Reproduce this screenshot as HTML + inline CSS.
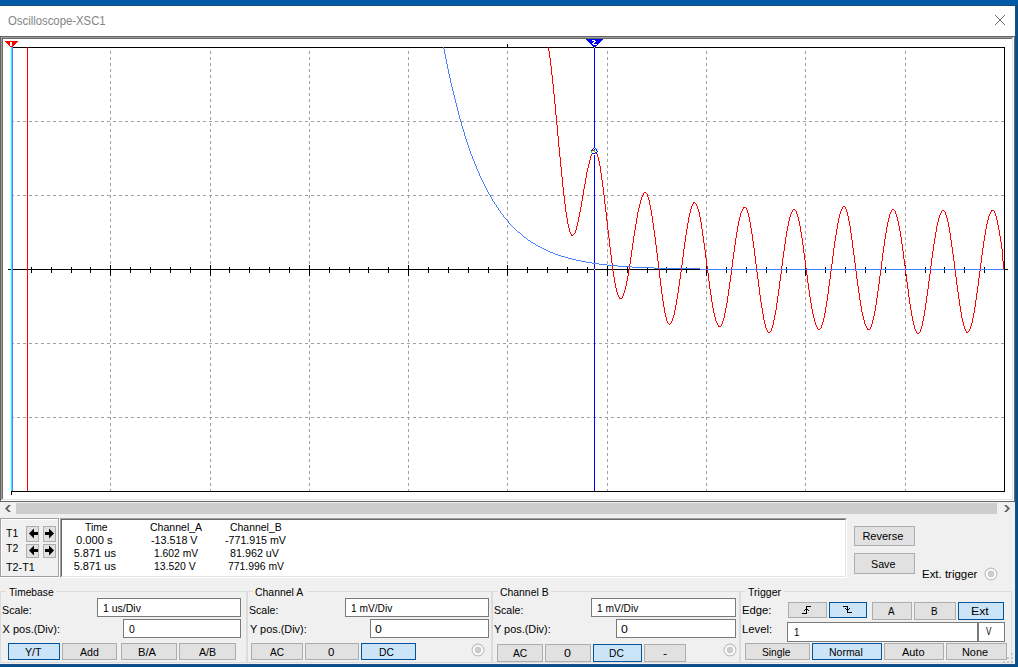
<!DOCTYPE html>
<html><head><meta charset="utf-8"><style>
html,body{margin:0;padding:0;}
body{width:1018px;height:667px;overflow:hidden;position:relative;background:#f0f0f0;font-family:"Liberation Sans",sans-serif;font-size:11px;color:#000;}
.a{position:absolute;}
.t{position:absolute;white-space:pre;line-height:13px;}
.btn{position:absolute;box-sizing:border-box;background:#e1e1e1;border:1px solid #adadad;text-align:center;white-space:pre;}
.sel{background:#cce4f7;border-color:#005499;}
.inp{position:absolute;box-sizing:border-box;background:#fff;border:1px solid #7a7a7a;white-space:pre;}
.grp{position:absolute;box-sizing:border-box;border:1px solid #dcdcdc;}
.gl{position:absolute;background:#f0f0f0;padding:0 2px;white-space:pre;line-height:13px;}
</style></head><body>
<div class="a" style="left:0;top:0;width:1018px;height:5px;background:#005aa5"></div>
<div class="a" style="left:0;top:5px;width:1018px;height:1px;background:#1a4a7a"></div>
<div class="a" style="left:0;top:6px;width:1015px;height:30px;background:#fff"></div>
<div class="t" style="left:8.18px;top:14.59px;font-size:12.3px;line-height:12.3px;color:#858585;transform:scaleX(0.9216);transform-origin:0 0;">Oscilloscope-XSC1</div>
<svg class="a" style="left:994px;top:14px" width="12" height="12"><path d="M1 1L11 11M11 1L1 11" stroke="#6a6a6a" stroke-width="1"/></svg>
<svg style="position:absolute;left:0;top:0" width="1018" height="502" shape-rendering="crispEdges"><rect x="0" y="36" width="1015" height="1" fill="#646464"/><rect x="0" y="36" width="1" height="466" fill="#646464"/><rect x="1014" y="36" width="1" height="466" fill="#646464"/><rect x="0" y="501" width="1015" height="1" fill="#646464"/><rect x="1" y="37" width="1013" height="1" fill="#a0a0a0"/><rect x="1" y="37" width="1" height="464" fill="#a0a0a0"/><rect x="2" y="38" width="1011" height="1" fill="#696969"/><rect x="2" y="38" width="1" height="462" fill="#696969"/><rect x="1013" y="37" width="1" height="464" fill="#ffffff"/><rect x="1" y="500" width="1013" height="1" fill="#ffffff"/><rect x="1012" y="38" width="1" height="462" fill="#e3e3e3"/><rect x="2" y="499" width="1011" height="1" fill="#e3e3e3"/><rect x="3" y="39" width="1009" height="460" fill="#ffffff"/><path fill="#a0a0a0" d="M110 51h1v3h-1zM110 57h1v3h-1zM110 63h1v3h-1zM110 69h1v3h-1zM110 75h1v3h-1zM110 81h1v3h-1zM110 87h1v3h-1zM110 93h1v3h-1zM110 99h1v3h-1zM110 105h1v3h-1zM110 111h1v3h-1zM110 117h1v3h-1zM110 123h1v3h-1zM110 129h1v3h-1zM110 135h1v3h-1zM110 141h1v3h-1zM110 147h1v3h-1zM110 153h1v3h-1zM110 159h1v3h-1zM110 165h1v3h-1zM110 171h1v3h-1zM110 177h1v3h-1zM110 183h1v3h-1zM110 189h1v3h-1zM110 195h1v3h-1zM110 201h1v3h-1zM110 207h1v3h-1zM110 213h1v3h-1zM110 219h1v3h-1zM110 225h1v3h-1zM110 231h1v3h-1zM110 237h1v3h-1zM110 243h1v3h-1zM110 249h1v3h-1zM110 255h1v3h-1zM110 261h1v3h-1zM110 267h1v3h-1zM110 273h1v3h-1zM110 279h1v3h-1zM110 285h1v3h-1zM110 291h1v3h-1zM110 297h1v3h-1zM110 303h1v3h-1zM110 309h1v3h-1zM110 315h1v3h-1zM110 321h1v3h-1zM110 327h1v3h-1zM110 333h1v3h-1zM110 339h1v3h-1zM110 345h1v3h-1zM110 351h1v3h-1zM110 357h1v3h-1zM110 363h1v3h-1zM110 369h1v3h-1zM110 375h1v3h-1zM110 381h1v3h-1zM110 387h1v3h-1zM110 393h1v3h-1zM110 399h1v3h-1zM110 405h1v3h-1zM110 411h1v3h-1zM110 417h1v3h-1zM110 423h1v3h-1zM110 429h1v3h-1zM110 435h1v3h-1zM110 441h1v3h-1zM110 447h1v3h-1zM110 453h1v3h-1zM110 459h1v3h-1zM110 465h1v3h-1zM110 471h1v3h-1zM110 477h1v3h-1zM110 483h1v3h-1zM110 489h1v2h-1zM210 51h1v3h-1zM210 57h1v3h-1zM210 63h1v3h-1zM210 69h1v3h-1zM210 75h1v3h-1zM210 81h1v3h-1zM210 87h1v3h-1zM210 93h1v3h-1zM210 99h1v3h-1zM210 105h1v3h-1zM210 111h1v3h-1zM210 117h1v3h-1zM210 123h1v3h-1zM210 129h1v3h-1zM210 135h1v3h-1zM210 141h1v3h-1zM210 147h1v3h-1zM210 153h1v3h-1zM210 159h1v3h-1zM210 165h1v3h-1zM210 171h1v3h-1zM210 177h1v3h-1zM210 183h1v3h-1zM210 189h1v3h-1zM210 195h1v3h-1zM210 201h1v3h-1zM210 207h1v3h-1zM210 213h1v3h-1zM210 219h1v3h-1zM210 225h1v3h-1zM210 231h1v3h-1zM210 237h1v3h-1zM210 243h1v3h-1zM210 249h1v3h-1zM210 255h1v3h-1zM210 261h1v3h-1zM210 267h1v3h-1zM210 273h1v3h-1zM210 279h1v3h-1zM210 285h1v3h-1zM210 291h1v3h-1zM210 297h1v3h-1zM210 303h1v3h-1zM210 309h1v3h-1zM210 315h1v3h-1zM210 321h1v3h-1zM210 327h1v3h-1zM210 333h1v3h-1zM210 339h1v3h-1zM210 345h1v3h-1zM210 351h1v3h-1zM210 357h1v3h-1zM210 363h1v3h-1zM210 369h1v3h-1zM210 375h1v3h-1zM210 381h1v3h-1zM210 387h1v3h-1zM210 393h1v3h-1zM210 399h1v3h-1zM210 405h1v3h-1zM210 411h1v3h-1zM210 417h1v3h-1zM210 423h1v3h-1zM210 429h1v3h-1zM210 435h1v3h-1zM210 441h1v3h-1zM210 447h1v3h-1zM210 453h1v3h-1zM210 459h1v3h-1zM210 465h1v3h-1zM210 471h1v3h-1zM210 477h1v3h-1zM210 483h1v3h-1zM210 489h1v2h-1zM309 51h1v3h-1zM309 57h1v3h-1zM309 63h1v3h-1zM309 69h1v3h-1zM309 75h1v3h-1zM309 81h1v3h-1zM309 87h1v3h-1zM309 93h1v3h-1zM309 99h1v3h-1zM309 105h1v3h-1zM309 111h1v3h-1zM309 117h1v3h-1zM309 123h1v3h-1zM309 129h1v3h-1zM309 135h1v3h-1zM309 141h1v3h-1zM309 147h1v3h-1zM309 153h1v3h-1zM309 159h1v3h-1zM309 165h1v3h-1zM309 171h1v3h-1zM309 177h1v3h-1zM309 183h1v3h-1zM309 189h1v3h-1zM309 195h1v3h-1zM309 201h1v3h-1zM309 207h1v3h-1zM309 213h1v3h-1zM309 219h1v3h-1zM309 225h1v3h-1zM309 231h1v3h-1zM309 237h1v3h-1zM309 243h1v3h-1zM309 249h1v3h-1zM309 255h1v3h-1zM309 261h1v3h-1zM309 267h1v3h-1zM309 273h1v3h-1zM309 279h1v3h-1zM309 285h1v3h-1zM309 291h1v3h-1zM309 297h1v3h-1zM309 303h1v3h-1zM309 309h1v3h-1zM309 315h1v3h-1zM309 321h1v3h-1zM309 327h1v3h-1zM309 333h1v3h-1zM309 339h1v3h-1zM309 345h1v3h-1zM309 351h1v3h-1zM309 357h1v3h-1zM309 363h1v3h-1zM309 369h1v3h-1zM309 375h1v3h-1zM309 381h1v3h-1zM309 387h1v3h-1zM309 393h1v3h-1zM309 399h1v3h-1zM309 405h1v3h-1zM309 411h1v3h-1zM309 417h1v3h-1zM309 423h1v3h-1zM309 429h1v3h-1zM309 435h1v3h-1zM309 441h1v3h-1zM309 447h1v3h-1zM309 453h1v3h-1zM309 459h1v3h-1zM309 465h1v3h-1zM309 471h1v3h-1zM309 477h1v3h-1zM309 483h1v3h-1zM309 489h1v2h-1zM408 51h1v3h-1zM408 57h1v3h-1zM408 63h1v3h-1zM408 69h1v3h-1zM408 75h1v3h-1zM408 81h1v3h-1zM408 87h1v3h-1zM408 93h1v3h-1zM408 99h1v3h-1zM408 105h1v3h-1zM408 111h1v3h-1zM408 117h1v3h-1zM408 123h1v3h-1zM408 129h1v3h-1zM408 135h1v3h-1zM408 141h1v3h-1zM408 147h1v3h-1zM408 153h1v3h-1zM408 159h1v3h-1zM408 165h1v3h-1zM408 171h1v3h-1zM408 177h1v3h-1zM408 183h1v3h-1zM408 189h1v3h-1zM408 195h1v3h-1zM408 201h1v3h-1zM408 207h1v3h-1zM408 213h1v3h-1zM408 219h1v3h-1zM408 225h1v3h-1zM408 231h1v3h-1zM408 237h1v3h-1zM408 243h1v3h-1zM408 249h1v3h-1zM408 255h1v3h-1zM408 261h1v3h-1zM408 267h1v3h-1zM408 273h1v3h-1zM408 279h1v3h-1zM408 285h1v3h-1zM408 291h1v3h-1zM408 297h1v3h-1zM408 303h1v3h-1zM408 309h1v3h-1zM408 315h1v3h-1zM408 321h1v3h-1zM408 327h1v3h-1zM408 333h1v3h-1zM408 339h1v3h-1zM408 345h1v3h-1zM408 351h1v3h-1zM408 357h1v3h-1zM408 363h1v3h-1zM408 369h1v3h-1zM408 375h1v3h-1zM408 381h1v3h-1zM408 387h1v3h-1zM408 393h1v3h-1zM408 399h1v3h-1zM408 405h1v3h-1zM408 411h1v3h-1zM408 417h1v3h-1zM408 423h1v3h-1zM408 429h1v3h-1zM408 435h1v3h-1zM408 441h1v3h-1zM408 447h1v3h-1zM408 453h1v3h-1zM408 459h1v3h-1zM408 465h1v3h-1zM408 471h1v3h-1zM408 477h1v3h-1zM408 483h1v3h-1zM408 489h1v2h-1zM507 51h1v3h-1zM507 57h1v3h-1zM507 63h1v3h-1zM507 69h1v3h-1zM507 75h1v3h-1zM507 81h1v3h-1zM507 87h1v3h-1zM507 93h1v3h-1zM507 99h1v3h-1zM507 105h1v3h-1zM507 111h1v3h-1zM507 117h1v3h-1zM507 123h1v3h-1zM507 129h1v3h-1zM507 135h1v3h-1zM507 141h1v3h-1zM507 147h1v3h-1zM507 153h1v3h-1zM507 159h1v3h-1zM507 165h1v3h-1zM507 171h1v3h-1zM507 177h1v3h-1zM507 183h1v3h-1zM507 189h1v3h-1zM507 195h1v3h-1zM507 201h1v3h-1zM507 207h1v3h-1zM507 213h1v3h-1zM507 219h1v3h-1zM507 225h1v3h-1zM507 231h1v3h-1zM507 237h1v3h-1zM507 243h1v3h-1zM507 249h1v3h-1zM507 255h1v3h-1zM507 261h1v3h-1zM507 267h1v3h-1zM507 273h1v3h-1zM507 279h1v3h-1zM507 285h1v3h-1zM507 291h1v3h-1zM507 297h1v3h-1zM507 303h1v3h-1zM507 309h1v3h-1zM507 315h1v3h-1zM507 321h1v3h-1zM507 327h1v3h-1zM507 333h1v3h-1zM507 339h1v3h-1zM507 345h1v3h-1zM507 351h1v3h-1zM507 357h1v3h-1zM507 363h1v3h-1zM507 369h1v3h-1zM507 375h1v3h-1zM507 381h1v3h-1zM507 387h1v3h-1zM507 393h1v3h-1zM507 399h1v3h-1zM507 405h1v3h-1zM507 411h1v3h-1zM507 417h1v3h-1zM507 423h1v3h-1zM507 429h1v3h-1zM507 435h1v3h-1zM507 441h1v3h-1zM507 447h1v3h-1zM507 453h1v3h-1zM507 459h1v3h-1zM507 465h1v3h-1zM507 471h1v3h-1zM507 477h1v3h-1zM507 483h1v3h-1zM507 489h1v2h-1zM607 51h1v3h-1zM607 57h1v3h-1zM607 63h1v3h-1zM607 69h1v3h-1zM607 75h1v3h-1zM607 81h1v3h-1zM607 87h1v3h-1zM607 93h1v3h-1zM607 99h1v3h-1zM607 105h1v3h-1zM607 111h1v3h-1zM607 117h1v3h-1zM607 123h1v3h-1zM607 129h1v3h-1zM607 135h1v3h-1zM607 141h1v3h-1zM607 147h1v3h-1zM607 153h1v3h-1zM607 159h1v3h-1zM607 165h1v3h-1zM607 171h1v3h-1zM607 177h1v3h-1zM607 183h1v3h-1zM607 189h1v3h-1zM607 195h1v3h-1zM607 201h1v3h-1zM607 207h1v3h-1zM607 213h1v3h-1zM607 219h1v3h-1zM607 225h1v3h-1zM607 231h1v3h-1zM607 237h1v3h-1zM607 243h1v3h-1zM607 249h1v3h-1zM607 255h1v3h-1zM607 261h1v3h-1zM607 267h1v3h-1zM607 273h1v3h-1zM607 279h1v3h-1zM607 285h1v3h-1zM607 291h1v3h-1zM607 297h1v3h-1zM607 303h1v3h-1zM607 309h1v3h-1zM607 315h1v3h-1zM607 321h1v3h-1zM607 327h1v3h-1zM607 333h1v3h-1zM607 339h1v3h-1zM607 345h1v3h-1zM607 351h1v3h-1zM607 357h1v3h-1zM607 363h1v3h-1zM607 369h1v3h-1zM607 375h1v3h-1zM607 381h1v3h-1zM607 387h1v3h-1zM607 393h1v3h-1zM607 399h1v3h-1zM607 405h1v3h-1zM607 411h1v3h-1zM607 417h1v3h-1zM607 423h1v3h-1zM607 429h1v3h-1zM607 435h1v3h-1zM607 441h1v3h-1zM607 447h1v3h-1zM607 453h1v3h-1zM607 459h1v3h-1zM607 465h1v3h-1zM607 471h1v3h-1zM607 477h1v3h-1zM607 483h1v3h-1zM607 489h1v2h-1zM706 51h1v3h-1zM706 57h1v3h-1zM706 63h1v3h-1zM706 69h1v3h-1zM706 75h1v3h-1zM706 81h1v3h-1zM706 87h1v3h-1zM706 93h1v3h-1zM706 99h1v3h-1zM706 105h1v3h-1zM706 111h1v3h-1zM706 117h1v3h-1zM706 123h1v3h-1zM706 129h1v3h-1zM706 135h1v3h-1zM706 141h1v3h-1zM706 147h1v3h-1zM706 153h1v3h-1zM706 159h1v3h-1zM706 165h1v3h-1zM706 171h1v3h-1zM706 177h1v3h-1zM706 183h1v3h-1zM706 189h1v3h-1zM706 195h1v3h-1zM706 201h1v3h-1zM706 207h1v3h-1zM706 213h1v3h-1zM706 219h1v3h-1zM706 225h1v3h-1zM706 231h1v3h-1zM706 237h1v3h-1zM706 243h1v3h-1zM706 249h1v3h-1zM706 255h1v3h-1zM706 261h1v3h-1zM706 267h1v3h-1zM706 273h1v3h-1zM706 279h1v3h-1zM706 285h1v3h-1zM706 291h1v3h-1zM706 297h1v3h-1zM706 303h1v3h-1zM706 309h1v3h-1zM706 315h1v3h-1zM706 321h1v3h-1zM706 327h1v3h-1zM706 333h1v3h-1zM706 339h1v3h-1zM706 345h1v3h-1zM706 351h1v3h-1zM706 357h1v3h-1zM706 363h1v3h-1zM706 369h1v3h-1zM706 375h1v3h-1zM706 381h1v3h-1zM706 387h1v3h-1zM706 393h1v3h-1zM706 399h1v3h-1zM706 405h1v3h-1zM706 411h1v3h-1zM706 417h1v3h-1zM706 423h1v3h-1zM706 429h1v3h-1zM706 435h1v3h-1zM706 441h1v3h-1zM706 447h1v3h-1zM706 453h1v3h-1zM706 459h1v3h-1zM706 465h1v3h-1zM706 471h1v3h-1zM706 477h1v3h-1zM706 483h1v3h-1zM706 489h1v2h-1zM805 51h1v3h-1zM805 57h1v3h-1zM805 63h1v3h-1zM805 69h1v3h-1zM805 75h1v3h-1zM805 81h1v3h-1zM805 87h1v3h-1zM805 93h1v3h-1zM805 99h1v3h-1zM805 105h1v3h-1zM805 111h1v3h-1zM805 117h1v3h-1zM805 123h1v3h-1zM805 129h1v3h-1zM805 135h1v3h-1zM805 141h1v3h-1zM805 147h1v3h-1zM805 153h1v3h-1zM805 159h1v3h-1zM805 165h1v3h-1zM805 171h1v3h-1zM805 177h1v3h-1zM805 183h1v3h-1zM805 189h1v3h-1zM805 195h1v3h-1zM805 201h1v3h-1zM805 207h1v3h-1zM805 213h1v3h-1zM805 219h1v3h-1zM805 225h1v3h-1zM805 231h1v3h-1zM805 237h1v3h-1zM805 243h1v3h-1zM805 249h1v3h-1zM805 255h1v3h-1zM805 261h1v3h-1zM805 267h1v3h-1zM805 273h1v3h-1zM805 279h1v3h-1zM805 285h1v3h-1zM805 291h1v3h-1zM805 297h1v3h-1zM805 303h1v3h-1zM805 309h1v3h-1zM805 315h1v3h-1zM805 321h1v3h-1zM805 327h1v3h-1zM805 333h1v3h-1zM805 339h1v3h-1zM805 345h1v3h-1zM805 351h1v3h-1zM805 357h1v3h-1zM805 363h1v3h-1zM805 369h1v3h-1zM805 375h1v3h-1zM805 381h1v3h-1zM805 387h1v3h-1zM805 393h1v3h-1zM805 399h1v3h-1zM805 405h1v3h-1zM805 411h1v3h-1zM805 417h1v3h-1zM805 423h1v3h-1zM805 429h1v3h-1zM805 435h1v3h-1zM805 441h1v3h-1zM805 447h1v3h-1zM805 453h1v3h-1zM805 459h1v3h-1zM805 465h1v3h-1zM805 471h1v3h-1zM805 477h1v3h-1zM805 483h1v3h-1zM805 489h1v2h-1zM905 51h1v3h-1zM905 57h1v3h-1zM905 63h1v3h-1zM905 69h1v3h-1zM905 75h1v3h-1zM905 81h1v3h-1zM905 87h1v3h-1zM905 93h1v3h-1zM905 99h1v3h-1zM905 105h1v3h-1zM905 111h1v3h-1zM905 117h1v3h-1zM905 123h1v3h-1zM905 129h1v3h-1zM905 135h1v3h-1zM905 141h1v3h-1zM905 147h1v3h-1zM905 153h1v3h-1zM905 159h1v3h-1zM905 165h1v3h-1zM905 171h1v3h-1zM905 177h1v3h-1zM905 183h1v3h-1zM905 189h1v3h-1zM905 195h1v3h-1zM905 201h1v3h-1zM905 207h1v3h-1zM905 213h1v3h-1zM905 219h1v3h-1zM905 225h1v3h-1zM905 231h1v3h-1zM905 237h1v3h-1zM905 243h1v3h-1zM905 249h1v3h-1zM905 255h1v3h-1zM905 261h1v3h-1zM905 267h1v3h-1zM905 273h1v3h-1zM905 279h1v3h-1zM905 285h1v3h-1zM905 291h1v3h-1zM905 297h1v3h-1zM905 303h1v3h-1zM905 309h1v3h-1zM905 315h1v3h-1zM905 321h1v3h-1zM905 327h1v3h-1zM905 333h1v3h-1zM905 339h1v3h-1zM905 345h1v3h-1zM905 351h1v3h-1zM905 357h1v3h-1zM905 363h1v3h-1zM905 369h1v3h-1zM905 375h1v3h-1zM905 381h1v3h-1zM905 387h1v3h-1zM905 393h1v3h-1zM905 399h1v3h-1zM905 405h1v3h-1zM905 411h1v3h-1zM905 417h1v3h-1zM905 423h1v3h-1zM905 429h1v3h-1zM905 435h1v3h-1zM905 441h1v3h-1zM905 447h1v3h-1zM905 453h1v3h-1zM905 459h1v3h-1zM905 465h1v3h-1zM905 471h1v3h-1zM905 477h1v3h-1zM905 483h1v3h-1zM905 489h1v2h-1zM11 121h3v1h-3zM17 121h3v1h-3zM23 121h3v1h-3zM29 121h3v1h-3zM35 121h3v1h-3zM41 121h3v1h-3zM47 121h3v1h-3zM53 121h3v1h-3zM59 121h3v1h-3zM65 121h3v1h-3zM71 121h3v1h-3zM77 121h3v1h-3zM83 121h3v1h-3zM89 121h3v1h-3zM95 121h3v1h-3zM101 121h3v1h-3zM107 121h3v1h-3zM113 121h3v1h-3zM119 121h3v1h-3zM125 121h3v1h-3zM131 121h3v1h-3zM137 121h3v1h-3zM143 121h3v1h-3zM149 121h3v1h-3zM155 121h3v1h-3zM161 121h3v1h-3zM167 121h3v1h-3zM173 121h3v1h-3zM179 121h3v1h-3zM185 121h3v1h-3zM191 121h3v1h-3zM197 121h3v1h-3zM203 121h3v1h-3zM209 121h3v1h-3zM215 121h3v1h-3zM221 121h3v1h-3zM227 121h3v1h-3zM233 121h3v1h-3zM239 121h3v1h-3zM245 121h3v1h-3zM251 121h3v1h-3zM257 121h3v1h-3zM263 121h3v1h-3zM269 121h3v1h-3zM275 121h3v1h-3zM281 121h3v1h-3zM287 121h3v1h-3zM293 121h3v1h-3zM299 121h3v1h-3zM305 121h3v1h-3zM311 121h3v1h-3zM317 121h3v1h-3zM323 121h3v1h-3zM329 121h3v1h-3zM335 121h3v1h-3zM341 121h3v1h-3zM347 121h3v1h-3zM353 121h3v1h-3zM359 121h3v1h-3zM365 121h3v1h-3zM371 121h3v1h-3zM377 121h3v1h-3zM383 121h3v1h-3zM389 121h3v1h-3zM395 121h3v1h-3zM401 121h3v1h-3zM407 121h3v1h-3zM413 121h3v1h-3zM419 121h3v1h-3zM425 121h3v1h-3zM431 121h3v1h-3zM437 121h3v1h-3zM443 121h3v1h-3zM449 121h3v1h-3zM455 121h3v1h-3zM461 121h3v1h-3zM467 121h3v1h-3zM473 121h3v1h-3zM479 121h3v1h-3zM485 121h3v1h-3zM491 121h3v1h-3zM497 121h3v1h-3zM503 121h3v1h-3zM509 121h3v1h-3zM515 121h3v1h-3zM521 121h3v1h-3zM527 121h3v1h-3zM533 121h3v1h-3zM539 121h3v1h-3zM545 121h3v1h-3zM551 121h3v1h-3zM557 121h3v1h-3zM563 121h3v1h-3zM569 121h3v1h-3zM575 121h3v1h-3zM581 121h3v1h-3zM587 121h3v1h-3zM593 121h3v1h-3zM599 121h3v1h-3zM605 121h3v1h-3zM611 121h3v1h-3zM617 121h3v1h-3zM623 121h3v1h-3zM629 121h3v1h-3zM635 121h3v1h-3zM641 121h3v1h-3zM647 121h3v1h-3zM653 121h3v1h-3zM659 121h3v1h-3zM665 121h3v1h-3zM671 121h3v1h-3zM677 121h3v1h-3zM683 121h3v1h-3zM689 121h3v1h-3zM695 121h3v1h-3zM701 121h3v1h-3zM707 121h3v1h-3zM713 121h3v1h-3zM719 121h3v1h-3zM725 121h3v1h-3zM731 121h3v1h-3zM737 121h3v1h-3zM743 121h3v1h-3zM749 121h3v1h-3zM755 121h3v1h-3zM761 121h3v1h-3zM767 121h3v1h-3zM773 121h3v1h-3zM779 121h3v1h-3zM785 121h3v1h-3zM791 121h3v1h-3zM797 121h3v1h-3zM803 121h3v1h-3zM809 121h3v1h-3zM815 121h3v1h-3zM821 121h3v1h-3zM827 121h3v1h-3zM833 121h3v1h-3zM839 121h3v1h-3zM845 121h3v1h-3zM851 121h3v1h-3zM857 121h3v1h-3zM863 121h3v1h-3zM869 121h3v1h-3zM875 121h3v1h-3zM881 121h3v1h-3zM887 121h3v1h-3zM893 121h3v1h-3zM899 121h3v1h-3zM905 121h3v1h-3zM911 121h3v1h-3zM917 121h3v1h-3zM923 121h3v1h-3zM929 121h3v1h-3zM935 121h3v1h-3zM941 121h3v1h-3zM947 121h3v1h-3zM953 121h3v1h-3zM959 121h3v1h-3zM965 121h3v1h-3zM971 121h3v1h-3zM977 121h3v1h-3zM983 121h3v1h-3zM989 121h3v1h-3zM995 121h3v1h-3zM1001 121h3v1h-3zM11 195h3v1h-3zM17 195h3v1h-3zM23 195h3v1h-3zM29 195h3v1h-3zM35 195h3v1h-3zM41 195h3v1h-3zM47 195h3v1h-3zM53 195h3v1h-3zM59 195h3v1h-3zM65 195h3v1h-3zM71 195h3v1h-3zM77 195h3v1h-3zM83 195h3v1h-3zM89 195h3v1h-3zM95 195h3v1h-3zM101 195h3v1h-3zM107 195h3v1h-3zM113 195h3v1h-3zM119 195h3v1h-3zM125 195h3v1h-3zM131 195h3v1h-3zM137 195h3v1h-3zM143 195h3v1h-3zM149 195h3v1h-3zM155 195h3v1h-3zM161 195h3v1h-3zM167 195h3v1h-3zM173 195h3v1h-3zM179 195h3v1h-3zM185 195h3v1h-3zM191 195h3v1h-3zM197 195h3v1h-3zM203 195h3v1h-3zM209 195h3v1h-3zM215 195h3v1h-3zM221 195h3v1h-3zM227 195h3v1h-3zM233 195h3v1h-3zM239 195h3v1h-3zM245 195h3v1h-3zM251 195h3v1h-3zM257 195h3v1h-3zM263 195h3v1h-3zM269 195h3v1h-3zM275 195h3v1h-3zM281 195h3v1h-3zM287 195h3v1h-3zM293 195h3v1h-3zM299 195h3v1h-3zM305 195h3v1h-3zM311 195h3v1h-3zM317 195h3v1h-3zM323 195h3v1h-3zM329 195h3v1h-3zM335 195h3v1h-3zM341 195h3v1h-3zM347 195h3v1h-3zM353 195h3v1h-3zM359 195h3v1h-3zM365 195h3v1h-3zM371 195h3v1h-3zM377 195h3v1h-3zM383 195h3v1h-3zM389 195h3v1h-3zM395 195h3v1h-3zM401 195h3v1h-3zM407 195h3v1h-3zM413 195h3v1h-3zM419 195h3v1h-3zM425 195h3v1h-3zM431 195h3v1h-3zM437 195h3v1h-3zM443 195h3v1h-3zM449 195h3v1h-3zM455 195h3v1h-3zM461 195h3v1h-3zM467 195h3v1h-3zM473 195h3v1h-3zM479 195h3v1h-3zM485 195h3v1h-3zM491 195h3v1h-3zM497 195h3v1h-3zM503 195h3v1h-3zM509 195h3v1h-3zM515 195h3v1h-3zM521 195h3v1h-3zM527 195h3v1h-3zM533 195h3v1h-3zM539 195h3v1h-3zM545 195h3v1h-3zM551 195h3v1h-3zM557 195h3v1h-3zM563 195h3v1h-3zM569 195h3v1h-3zM575 195h3v1h-3zM581 195h3v1h-3zM587 195h3v1h-3zM593 195h3v1h-3zM599 195h3v1h-3zM605 195h3v1h-3zM611 195h3v1h-3zM617 195h3v1h-3zM623 195h3v1h-3zM629 195h3v1h-3zM635 195h3v1h-3zM641 195h3v1h-3zM647 195h3v1h-3zM653 195h3v1h-3zM659 195h3v1h-3zM665 195h3v1h-3zM671 195h3v1h-3zM677 195h3v1h-3zM683 195h3v1h-3zM689 195h3v1h-3zM695 195h3v1h-3zM701 195h3v1h-3zM707 195h3v1h-3zM713 195h3v1h-3zM719 195h3v1h-3zM725 195h3v1h-3zM731 195h3v1h-3zM737 195h3v1h-3zM743 195h3v1h-3zM749 195h3v1h-3zM755 195h3v1h-3zM761 195h3v1h-3zM767 195h3v1h-3zM773 195h3v1h-3zM779 195h3v1h-3zM785 195h3v1h-3zM791 195h3v1h-3zM797 195h3v1h-3zM803 195h3v1h-3zM809 195h3v1h-3zM815 195h3v1h-3zM821 195h3v1h-3zM827 195h3v1h-3zM833 195h3v1h-3zM839 195h3v1h-3zM845 195h3v1h-3zM851 195h3v1h-3zM857 195h3v1h-3zM863 195h3v1h-3zM869 195h3v1h-3zM875 195h3v1h-3zM881 195h3v1h-3zM887 195h3v1h-3zM893 195h3v1h-3zM899 195h3v1h-3zM905 195h3v1h-3zM911 195h3v1h-3zM917 195h3v1h-3zM923 195h3v1h-3zM929 195h3v1h-3zM935 195h3v1h-3zM941 195h3v1h-3zM947 195h3v1h-3zM953 195h3v1h-3zM959 195h3v1h-3zM965 195h3v1h-3zM971 195h3v1h-3zM977 195h3v1h-3zM983 195h3v1h-3zM989 195h3v1h-3zM995 195h3v1h-3zM1001 195h3v1h-3zM11 343h3v1h-3zM17 343h3v1h-3zM23 343h3v1h-3zM29 343h3v1h-3zM35 343h3v1h-3zM41 343h3v1h-3zM47 343h3v1h-3zM53 343h3v1h-3zM59 343h3v1h-3zM65 343h3v1h-3zM71 343h3v1h-3zM77 343h3v1h-3zM83 343h3v1h-3zM89 343h3v1h-3zM95 343h3v1h-3zM101 343h3v1h-3zM107 343h3v1h-3zM113 343h3v1h-3zM119 343h3v1h-3zM125 343h3v1h-3zM131 343h3v1h-3zM137 343h3v1h-3zM143 343h3v1h-3zM149 343h3v1h-3zM155 343h3v1h-3zM161 343h3v1h-3zM167 343h3v1h-3zM173 343h3v1h-3zM179 343h3v1h-3zM185 343h3v1h-3zM191 343h3v1h-3zM197 343h3v1h-3zM203 343h3v1h-3zM209 343h3v1h-3zM215 343h3v1h-3zM221 343h3v1h-3zM227 343h3v1h-3zM233 343h3v1h-3zM239 343h3v1h-3zM245 343h3v1h-3zM251 343h3v1h-3zM257 343h3v1h-3zM263 343h3v1h-3zM269 343h3v1h-3zM275 343h3v1h-3zM281 343h3v1h-3zM287 343h3v1h-3zM293 343h3v1h-3zM299 343h3v1h-3zM305 343h3v1h-3zM311 343h3v1h-3zM317 343h3v1h-3zM323 343h3v1h-3zM329 343h3v1h-3zM335 343h3v1h-3zM341 343h3v1h-3zM347 343h3v1h-3zM353 343h3v1h-3zM359 343h3v1h-3zM365 343h3v1h-3zM371 343h3v1h-3zM377 343h3v1h-3zM383 343h3v1h-3zM389 343h3v1h-3zM395 343h3v1h-3zM401 343h3v1h-3zM407 343h3v1h-3zM413 343h3v1h-3zM419 343h3v1h-3zM425 343h3v1h-3zM431 343h3v1h-3zM437 343h3v1h-3zM443 343h3v1h-3zM449 343h3v1h-3zM455 343h3v1h-3zM461 343h3v1h-3zM467 343h3v1h-3zM473 343h3v1h-3zM479 343h3v1h-3zM485 343h3v1h-3zM491 343h3v1h-3zM497 343h3v1h-3zM503 343h3v1h-3zM509 343h3v1h-3zM515 343h3v1h-3zM521 343h3v1h-3zM527 343h3v1h-3zM533 343h3v1h-3zM539 343h3v1h-3zM545 343h3v1h-3zM551 343h3v1h-3zM557 343h3v1h-3zM563 343h3v1h-3zM569 343h3v1h-3zM575 343h3v1h-3zM581 343h3v1h-3zM587 343h3v1h-3zM593 343h3v1h-3zM599 343h3v1h-3zM605 343h3v1h-3zM611 343h3v1h-3zM617 343h3v1h-3zM623 343h3v1h-3zM629 343h3v1h-3zM635 343h3v1h-3zM641 343h3v1h-3zM647 343h3v1h-3zM653 343h3v1h-3zM659 343h3v1h-3zM665 343h3v1h-3zM671 343h3v1h-3zM677 343h3v1h-3zM683 343h3v1h-3zM689 343h3v1h-3zM695 343h3v1h-3zM701 343h3v1h-3zM707 343h3v1h-3zM713 343h3v1h-3zM719 343h3v1h-3zM725 343h3v1h-3zM731 343h3v1h-3zM737 343h3v1h-3zM743 343h3v1h-3zM749 343h3v1h-3zM755 343h3v1h-3zM761 343h3v1h-3zM767 343h3v1h-3zM773 343h3v1h-3zM779 343h3v1h-3zM785 343h3v1h-3zM791 343h3v1h-3zM797 343h3v1h-3zM803 343h3v1h-3zM809 343h3v1h-3zM815 343h3v1h-3zM821 343h3v1h-3zM827 343h3v1h-3zM833 343h3v1h-3zM839 343h3v1h-3zM845 343h3v1h-3zM851 343h3v1h-3zM857 343h3v1h-3zM863 343h3v1h-3zM869 343h3v1h-3zM875 343h3v1h-3zM881 343h3v1h-3zM887 343h3v1h-3zM893 343h3v1h-3zM899 343h3v1h-3zM905 343h3v1h-3zM911 343h3v1h-3zM917 343h3v1h-3zM923 343h3v1h-3zM929 343h3v1h-3zM935 343h3v1h-3zM941 343h3v1h-3zM947 343h3v1h-3zM953 343h3v1h-3zM959 343h3v1h-3zM965 343h3v1h-3zM971 343h3v1h-3zM977 343h3v1h-3zM983 343h3v1h-3zM989 343h3v1h-3zM995 343h3v1h-3zM1001 343h3v1h-3zM11 417h3v1h-3zM17 417h3v1h-3zM23 417h3v1h-3zM29 417h3v1h-3zM35 417h3v1h-3zM41 417h3v1h-3zM47 417h3v1h-3zM53 417h3v1h-3zM59 417h3v1h-3zM65 417h3v1h-3zM71 417h3v1h-3zM77 417h3v1h-3zM83 417h3v1h-3zM89 417h3v1h-3zM95 417h3v1h-3zM101 417h3v1h-3zM107 417h3v1h-3zM113 417h3v1h-3zM119 417h3v1h-3zM125 417h3v1h-3zM131 417h3v1h-3zM137 417h3v1h-3zM143 417h3v1h-3zM149 417h3v1h-3zM155 417h3v1h-3zM161 417h3v1h-3zM167 417h3v1h-3zM173 417h3v1h-3zM179 417h3v1h-3zM185 417h3v1h-3zM191 417h3v1h-3zM197 417h3v1h-3zM203 417h3v1h-3zM209 417h3v1h-3zM215 417h3v1h-3zM221 417h3v1h-3zM227 417h3v1h-3zM233 417h3v1h-3zM239 417h3v1h-3zM245 417h3v1h-3zM251 417h3v1h-3zM257 417h3v1h-3zM263 417h3v1h-3zM269 417h3v1h-3zM275 417h3v1h-3zM281 417h3v1h-3zM287 417h3v1h-3zM293 417h3v1h-3zM299 417h3v1h-3zM305 417h3v1h-3zM311 417h3v1h-3zM317 417h3v1h-3zM323 417h3v1h-3zM329 417h3v1h-3zM335 417h3v1h-3zM341 417h3v1h-3zM347 417h3v1h-3zM353 417h3v1h-3zM359 417h3v1h-3zM365 417h3v1h-3zM371 417h3v1h-3zM377 417h3v1h-3zM383 417h3v1h-3zM389 417h3v1h-3zM395 417h3v1h-3zM401 417h3v1h-3zM407 417h3v1h-3zM413 417h3v1h-3zM419 417h3v1h-3zM425 417h3v1h-3zM431 417h3v1h-3zM437 417h3v1h-3zM443 417h3v1h-3zM449 417h3v1h-3zM455 417h3v1h-3zM461 417h3v1h-3zM467 417h3v1h-3zM473 417h3v1h-3zM479 417h3v1h-3zM485 417h3v1h-3zM491 417h3v1h-3zM497 417h3v1h-3zM503 417h3v1h-3zM509 417h3v1h-3zM515 417h3v1h-3zM521 417h3v1h-3zM527 417h3v1h-3zM533 417h3v1h-3zM539 417h3v1h-3zM545 417h3v1h-3zM551 417h3v1h-3zM557 417h3v1h-3zM563 417h3v1h-3zM569 417h3v1h-3zM575 417h3v1h-3zM581 417h3v1h-3zM587 417h3v1h-3zM593 417h3v1h-3zM599 417h3v1h-3zM605 417h3v1h-3zM611 417h3v1h-3zM617 417h3v1h-3zM623 417h3v1h-3zM629 417h3v1h-3zM635 417h3v1h-3zM641 417h3v1h-3zM647 417h3v1h-3zM653 417h3v1h-3zM659 417h3v1h-3zM665 417h3v1h-3zM671 417h3v1h-3zM677 417h3v1h-3zM683 417h3v1h-3zM689 417h3v1h-3zM695 417h3v1h-3zM701 417h3v1h-3zM707 417h3v1h-3zM713 417h3v1h-3zM719 417h3v1h-3zM725 417h3v1h-3zM731 417h3v1h-3zM737 417h3v1h-3zM743 417h3v1h-3zM749 417h3v1h-3zM755 417h3v1h-3zM761 417h3v1h-3zM767 417h3v1h-3zM773 417h3v1h-3zM779 417h3v1h-3zM785 417h3v1h-3zM791 417h3v1h-3zM797 417h3v1h-3zM803 417h3v1h-3zM809 417h3v1h-3zM815 417h3v1h-3zM821 417h3v1h-3zM827 417h3v1h-3zM833 417h3v1h-3zM839 417h3v1h-3zM845 417h3v1h-3zM851 417h3v1h-3zM857 417h3v1h-3zM863 417h3v1h-3zM869 417h3v1h-3zM875 417h3v1h-3zM881 417h3v1h-3zM887 417h3v1h-3zM893 417h3v1h-3zM899 417h3v1h-3zM905 417h3v1h-3zM911 417h3v1h-3zM917 417h3v1h-3zM923 417h3v1h-3zM929 417h3v1h-3zM935 417h3v1h-3zM941 417h3v1h-3zM947 417h3v1h-3zM953 417h3v1h-3zM959 417h3v1h-3zM965 417h3v1h-3zM971 417h3v1h-3zM977 417h3v1h-3zM983 417h3v1h-3zM989 417h3v1h-3zM995 417h3v1h-3zM1001 417h3v1h-3z"/><rect x="11" y="47" width="994" height="1" fill="#000"/><rect x="11" y="491" width="994" height="1" fill="#000"/><rect x="11" y="47" width="1" height="448" fill="#000"/><rect x="1004" y="47" width="1" height="445" fill="#000"/><rect x="8" y="269" width="1000" height="1" fill="#000"/><rect x="507" y="44" width="1" height="3" fill="#000"/><path fill="#000" d="M31 267h1v6h-1zM51 267h1v6h-1zM71 267h1v6h-1zM90 267h1v6h-1zM110 265h1v11h-1zM130 267h1v6h-1zM150 267h1v6h-1zM170 267h1v6h-1zM190 267h1v6h-1zM210 265h1v11h-1zM229 267h1v6h-1zM249 267h1v6h-1zM269 267h1v6h-1zM289 267h1v6h-1zM309 265h1v11h-1zM329 267h1v6h-1zM349 267h1v6h-1zM368 267h1v6h-1zM388 267h1v6h-1zM408 265h1v11h-1zM428 267h1v6h-1zM448 267h1v6h-1zM468 267h1v6h-1zM488 267h1v6h-1zM507 265h1v11h-1zM527 267h1v6h-1zM547 267h1v6h-1zM567 267h1v6h-1zM587 267h1v6h-1zM607 265h1v11h-1zM627 267h1v6h-1zM647 267h1v6h-1zM666 267h1v6h-1zM686 267h1v6h-1zM706 265h1v11h-1zM726 267h1v6h-1zM746 267h1v6h-1zM766 267h1v6h-1zM786 267h1v6h-1zM805 265h1v11h-1zM825 267h1v6h-1zM845 267h1v6h-1zM865 267h1v6h-1zM885 267h1v6h-1zM905 265h1v11h-1zM925 267h1v6h-1zM944 267h1v6h-1zM964 267h1v6h-1zM984 267h1v6h-1z"/><path fill="#ff0000" d="M548 47h1v4h-1zM549 51h1v7h-1zM550 58h1v8h-1zM551 66h1v9h-1zM552 75h1v9h-1zM553 84h1v10h-1zM554 94h1v10h-1zM555 104h1v11h-1zM556 115h1v10h-1zM557 125h1v11h-1zM558 136h1v11h-1zM559 147h1v10h-1zM560 157h1v10h-1zM561 167h1v10h-1zM562 177h1v10h-1zM563 187h1v9h-1zM564 196h1v8h-1zM565 204h1v8h-1zM566 212h1v6h-1zM567 218h1v6h-1zM568 224h1v4h-1zM569 228h1v4h-1zM570 232h1v2h-1zM571 234h1v2h-1zM572 235h1v1h-1zM573 234h1v1h-1zM574 233h1v1h-1zM575 230h1v3h-1zM576 226h1v4h-1zM577 222h1v4h-1zM578 217h1v5h-1zM579 212h1v5h-1zM580 207h1v5h-1zM581 201h1v6h-1zM582 195h1v6h-1zM583 189h1v6h-1zM584 184h1v5h-1zM585 178h1v6h-1zM586 172h1v6h-1zM587 168h1v4h-1zM588 164h1v4h-1zM589 160h1v4h-1zM590 156h1v4h-1zM591 154h1v2h-1zM592 152h1v2h-1zM593 150h1v2h-1zM594 150h1v1h-1zM595 151h1v1h-1zM596 152h1v2h-1zM597 154h1v3h-1zM598 157h1v4h-1zM599 161h1v5h-1zM600 166h1v7h-1zM601 173h1v7h-1zM602 180h1v7h-1zM603 187h1v8h-1zM604 195h1v9h-1zM605 204h1v8h-1zM606 212h1v9h-1zM607 221h1v9h-1zM608 230h1v8h-1zM609 238h1v9h-1zM610 247h1v8h-1zM611 255h1v8h-1zM612 263h1v8h-1zM613 271h1v6h-1zM614 277h1v6h-1zM615 283h1v5h-1zM616 288h1v4h-1zM617 292h1v3h-1zM618 295h1v2h-1zM619 297h1v2h-1zM620 298h1v1h-1zM621 298h1v1h-1zM622 296h1v2h-1zM623 293h1v3h-1zM624 290h1v3h-1zM625 286h1v4h-1zM626 281h1v5h-1zM627 276h1v5h-1zM628 270h1v6h-1zM629 264h1v6h-1zM630 257h1v7h-1zM631 250h1v7h-1zM632 243h1v7h-1zM633 236h1v7h-1zM634 230h1v6h-1zM635 224h1v6h-1zM636 218h1v6h-1zM637 212h1v6h-1zM638 208h1v4h-1zM639 204h1v4h-1zM640 200h1v4h-1zM641 197h1v3h-1zM642 195h1v2h-1zM643 193h1v2h-1zM644 192h1v1h-1zM645 192h1v1h-1zM646 193h1v1h-1zM647 194h1v3h-1zM648 197h1v3h-1zM649 200h1v5h-1zM650 205h1v5h-1zM651 210h1v6h-1zM652 216h1v7h-1zM653 223h1v7h-1zM654 230h1v7h-1zM655 237h1v8h-1zM656 245h1v8h-1zM657 253h1v8h-1zM658 261h1v8h-1zM659 269h1v9h-1zM660 278h1v8h-1zM661 286h1v8h-1zM662 294h1v7h-1zM663 301h1v6h-1zM664 307h1v6h-1zM665 313h1v4h-1zM666 317h1v4h-1zM667 321h1v2h-1zM668 323h1v1h-1zM669 324h1v1h-1zM670 323h1v1h-1zM671 321h1v2h-1zM672 318h1v3h-1zM673 315h1v3h-1zM674 310h1v5h-1zM675 305h1v5h-1zM676 299h1v6h-1zM677 293h1v6h-1zM678 286h1v7h-1zM679 279h1v7h-1zM680 272h1v7h-1zM681 265h1v7h-1zM682 257h1v8h-1zM683 249h1v8h-1zM684 242h1v7h-1zM685 235h1v7h-1zM686 229h1v6h-1zM687 223h1v6h-1zM688 217h1v6h-1zM689 213h1v4h-1zM690 209h1v4h-1zM691 206h1v3h-1zM692 204h1v2h-1zM693 202h1v2h-1zM694 202h1v1h-1zM695 203h1v1h-1zM696 204h1v2h-1zM697 206h1v3h-1zM698 209h1v3h-1zM699 212h1v5h-1zM700 217h1v5h-1zM701 222h1v7h-1zM702 229h1v7h-1zM703 236h1v7h-1zM704 243h1v7h-1zM705 250h1v8h-1zM706 258h1v8h-1zM707 266h1v7h-1zM708 273h1v8h-1zM709 281h1v8h-1zM710 289h1v6h-1zM711 295h1v7h-1zM712 302h1v6h-1zM713 308h1v5h-1zM714 313h1v4h-1zM715 317h1v4h-1zM716 321h1v2h-1zM717 323h1v2h-1zM718 325h1v2h-1zM719 326h1v1h-1zM720 326h1v1h-1zM721 324h1v2h-1zM722 321h1v3h-1zM723 318h1v3h-1zM724 313h1v5h-1zM725 308h1v5h-1zM726 303h1v5h-1zM727 296h1v7h-1zM728 289h1v7h-1zM729 282h1v7h-1zM730 275h1v7h-1zM731 267h1v8h-1zM732 259h1v8h-1zM733 252h1v7h-1zM734 245h1v7h-1zM735 238h1v7h-1zM736 232h1v6h-1zM737 226h1v6h-1zM738 221h1v5h-1zM739 217h1v4h-1zM740 213h1v4h-1zM741 211h1v2h-1zM742 209h1v2h-1zM743 207h1v2h-1zM744 207h1v1h-1zM745 207h1v1h-1zM746 208h1v2h-1zM747 210h1v3h-1zM748 213h1v4h-1zM749 217h1v5h-1zM750 222h1v6h-1zM751 228h1v6h-1zM752 234h1v7h-1zM753 241h1v7h-1zM754 248h1v8h-1zM755 256h1v8h-1zM756 264h1v8h-1zM757 272h1v7h-1zM758 279h1v8h-1zM759 287h1v8h-1zM760 295h1v7h-1zM761 302h1v6h-1zM762 308h1v6h-1zM763 314h1v6h-1zM764 320h1v4h-1zM765 324h1v4h-1zM766 328h1v2h-1zM767 330h1v2h-1zM768 332h1v1h-1zM769 332h1v1h-1zM770 331h1v1h-1zM771 328h1v3h-1zM772 325h1v3h-1zM773 320h1v5h-1zM774 315h1v5h-1zM775 310h1v5h-1zM776 303h1v7h-1zM777 296h1v7h-1zM778 289h1v7h-1zM779 281h1v8h-1zM780 274h1v7h-1zM781 266h1v8h-1zM782 258h1v8h-1zM783 251h1v7h-1zM784 244h1v7h-1zM785 237h1v7h-1zM786 231h1v6h-1zM787 226h1v5h-1zM788 221h1v5h-1zM789 217h1v4h-1zM790 214h1v3h-1zM791 212h1v2h-1zM792 210h1v2h-1zM793 209h1v1h-1zM794 209h1v1h-1zM795 210h1v1h-1zM796 211h1v3h-1zM797 214h1v3h-1zM798 217h1v4h-1zM799 221h1v5h-1zM800 226h1v6h-1zM801 232h1v6h-1zM802 238h1v7h-1zM803 245h1v8h-1zM804 253h1v7h-1zM805 260h1v8h-1zM806 268h1v7h-1zM807 275h1v8h-1zM808 283h1v7h-1zM809 290h1v7h-1zM810 297h1v6h-1zM811 303h1v6h-1zM812 309h1v5h-1zM813 314h1v4h-1zM814 318h1v4h-1zM815 322h1v3h-1zM816 325h1v2h-1zM817 327h1v2h-1zM818 329h1v1h-1zM819 329h1v1h-1zM820 328h1v1h-1zM821 325h1v3h-1zM822 322h1v3h-1zM823 318h1v4h-1zM824 313h1v5h-1zM825 307h1v6h-1zM826 301h1v6h-1zM827 294h1v7h-1zM828 286h1v8h-1zM829 279h1v7h-1zM830 271h1v8h-1zM831 264h1v7h-1zM832 256h1v8h-1zM833 248h1v8h-1zM834 241h1v7h-1zM835 235h1v6h-1zM836 229h1v6h-1zM837 223h1v6h-1zM838 218h1v5h-1zM839 214h1v4h-1zM840 211h1v3h-1zM841 209h1v2h-1zM842 207h1v2h-1zM843 206h1v1h-1zM844 206h1v1h-1zM845 207h1v2h-1zM846 209h1v3h-1zM847 212h1v4h-1zM848 216h1v5h-1zM849 221h1v5h-1zM850 226h1v7h-1zM851 233h1v7h-1zM852 240h1v8h-1zM853 248h1v7h-1zM854 255h1v8h-1zM855 263h1v8h-1zM856 271h1v8h-1zM857 279h1v7h-1zM858 286h1v7h-1zM859 293h1v7h-1zM860 300h1v6h-1zM861 306h1v6h-1zM862 312h1v4h-1zM863 316h1v4h-1zM864 320h1v4h-1zM865 324h1v2h-1zM866 326h1v2h-1zM867 328h1v2h-1zM868 329h1v1h-1zM869 329h1v1h-1zM870 327h1v2h-1zM871 324h1v3h-1zM872 320h1v4h-1zM873 316h1v4h-1zM874 311h1v5h-1zM875 305h1v6h-1zM876 298h1v7h-1zM877 291h1v7h-1zM878 284h1v7h-1zM879 276h1v8h-1zM880 269h1v7h-1zM881 261h1v8h-1zM882 253h1v8h-1zM883 246h1v7h-1zM884 239h1v7h-1zM885 233h1v6h-1zM886 227h1v6h-1zM887 222h1v5h-1zM888 218h1v4h-1zM889 214h1v4h-1zM890 212h1v2h-1zM891 210h1v2h-1zM892 209h1v1h-1zM893 209h1v1h-1zM894 210h1v1h-1zM895 211h1v3h-1zM896 214h1v3h-1zM897 217h1v4h-1zM898 221h1v5h-1zM899 226h1v5h-1zM900 231h1v6h-1zM901 237h1v7h-1zM902 244h1v7h-1zM903 251h1v8h-1zM904 259h1v7h-1zM905 266h1v8h-1zM906 274h1v8h-1zM907 282h1v7h-1zM908 289h1v8h-1zM909 297h1v7h-1zM910 304h1v6h-1zM911 310h1v6h-1zM912 316h1v5h-1zM913 321h1v4h-1zM914 325h1v4h-1zM915 329h1v2h-1zM916 331h1v2h-1zM917 333h1v1h-1zM918 333h1v1h-1zM919 332h1v1h-1zM920 329h1v3h-1zM921 326h1v3h-1zM922 321h1v5h-1zM923 316h1v5h-1zM924 310h1v6h-1zM925 303h1v7h-1zM926 296h1v7h-1zM927 289h1v7h-1zM928 281h1v8h-1zM929 274h1v7h-1zM930 266h1v8h-1zM931 258h1v8h-1zM932 251h1v7h-1zM933 244h1v7h-1zM934 238h1v6h-1zM935 232h1v6h-1zM936 226h1v6h-1zM937 222h1v4h-1zM938 218h1v4h-1zM939 215h1v3h-1zM940 213h1v2h-1zM941 211h1v2h-1zM942 210h1v1h-1zM943 210h1v1h-1zM944 211h1v1h-1zM945 212h1v3h-1zM946 215h1v3h-1zM947 218h1v4h-1zM948 222h1v5h-1zM949 227h1v6h-1zM950 233h1v7h-1zM951 240h1v7h-1zM952 247h1v7h-1zM953 254h1v7h-1zM954 261h1v8h-1zM955 269h1v8h-1zM956 277h1v8h-1zM957 285h1v7h-1zM958 292h1v7h-1zM959 299h1v7h-1zM960 306h1v6h-1zM961 312h1v6h-1zM962 318h1v4h-1zM963 322h1v4h-1zM964 326h1v3h-1zM965 329h1v2h-1zM966 331h1v2h-1zM967 332h1v1h-1zM968 331h1v1h-1zM969 329h1v2h-1zM970 326h1v3h-1zM971 323h1v3h-1zM972 318h1v5h-1zM973 313h1v5h-1zM974 307h1v6h-1zM975 300h1v7h-1zM976 293h1v7h-1zM977 286h1v7h-1zM978 278h1v8h-1zM979 271h1v7h-1zM980 263h1v8h-1zM981 255h1v8h-1zM982 248h1v7h-1zM983 241h1v7h-1zM984 235h1v6h-1zM985 229h1v6h-1zM986 224h1v5h-1zM987 220h1v4h-1zM988 216h1v4h-1zM989 214h1v2h-1zM990 212h1v2h-1zM991 210h1v2h-1zM992 210h1v1h-1zM993 210h1v1h-1zM994 211h1v2h-1zM995 213h1v3h-1zM996 216h1v4h-1zM997 220h1v5h-1zM998 225h1v5h-1zM999 230h1v6h-1zM1000 236h1v6h-1zM1001 242h1v7h-1zM1002 249h1v12h-1zM1003 261h1v9h-1z"/><path fill="#4880ff" d="M443 47h1v2h-1zM444 49h1v5h-1zM445 54h1v5h-1zM446 59h1v5h-1zM447 64h1v5h-1zM448 69h1v5h-1zM449 74h1v4h-1zM450 78h1v5h-1zM451 83h1v4h-1zM452 87h1v4h-1zM453 91h1v4h-1zM454 95h1v4h-1zM455 99h1v4h-1zM456 103h1v4h-1zM457 107h1v4h-1zM458 111h1v4h-1zM459 115h1v4h-1zM460 119h1v3h-1zM461 122h1v4h-1zM462 126h1v3h-1zM463 129h1v3h-1zM464 132h1v4h-1zM465 136h1v3h-1zM466 139h1v3h-1zM467 142h1v3h-1zM468 145h1v3h-1zM469 148h1v3h-1zM470 151h1v3h-1zM471 154h1v2h-1zM472 156h1v3h-1zM473 159h1v2h-1zM474 161h1v3h-1zM475 164h1v2h-1zM476 166h1v3h-1zM477 169h1v2h-1zM478 171h1v2h-1zM479 173h1v3h-1zM480 176h1v2h-1zM481 178h1v2h-1zM482 180h1v2h-1zM483 182h1v2h-1zM484 184h1v2h-1zM485 186h1v2h-1zM486 188h1v2h-1zM487 190h1v2h-1zM488 192h1v2h-1zM489 194h1v1h-1zM490 195h1v2h-1zM491 197h1v2h-1zM492 199h1v2h-1zM493 201h1v1h-1zM494 202h1v2h-1zM495 204h1v1h-1zM496 205h1v2h-1zM497 207h1v1h-1zM498 208h1v2h-1zM499 210h1v1h-1zM500 211h1v2h-1zM501 213h1v1h-1zM502 214h1v1h-1zM503 215h1v2h-1zM504 217h1v1h-1zM505 218h1v1h-1zM506 219h1v1h-1zM507 220h1v1h-1zM508 221h1v2h-1zM509 223h1v1h-1zM510 224h1v1h-1zM511 225h1v1h-1zM512 226h1v1h-1zM513 227h1v1h-1zM514 228h1v1h-1zM515 229h1v1h-1zM516 230h1v1h-1zM517 231h1v1h-1zM518 232h1v1h-1zM519 232h1v1h-1zM520 233h1v1h-1zM521 234h1v1h-1zM522 235h1v1h-1zM523 236h1v1h-1zM524 237h1v1h-1zM525 237h1v1h-1zM526 238h1v1h-1zM527 239h1v1h-1zM528 240h1v1h-1zM529 240h1v1h-1zM530 241h1v1h-1zM531 242h1v1h-1zM532 242h1v1h-1zM533 243h1v1h-1zM534 243h1v1h-1zM535 244h1v1h-1zM536 245h1v1h-1zM537 245h1v1h-1zM538 246h1v1h-1zM539 246h1v1h-1zM540 247h1v1h-1zM541 247h1v1h-1zM542 248h1v1h-1zM543 248h1v1h-1zM544 249h1v1h-1zM545 249h1v1h-1zM546 250h1v1h-1zM547 250h1v1h-1zM548 251h1v1h-1zM549 251h1v1h-1zM550 252h1v1h-1zM551 252h1v1h-1zM552 252h1v1h-1zM553 253h1v1h-1zM554 253h1v1h-1zM555 254h1v1h-1zM556 254h1v1h-1zM557 254h1v1h-1zM558 255h1v1h-1zM559 255h1v1h-1zM560 255h1v1h-1zM561 256h1v1h-1zM562 256h1v1h-1zM563 256h1v1h-1zM564 256h1v1h-1zM565 257h1v1h-1zM566 257h1v1h-1zM567 257h1v1h-1zM568 258h1v1h-1zM569 258h1v1h-1zM570 258h1v1h-1zM571 258h1v1h-1zM572 259h1v1h-1zM573 259h1v1h-1zM574 259h1v1h-1zM575 259h1v1h-1zM576 260h1v1h-1zM577 260h1v1h-1zM578 260h1v1h-1zM579 260h1v1h-1zM580 260h1v1h-1zM581 261h1v1h-1zM582 261h1v1h-1zM583 261h1v1h-1zM584 261h1v1h-1zM585 261h1v1h-1zM586 262h1v1h-1zM587 262h1v1h-1zM588 262h1v1h-1zM589 262h1v1h-1zM590 262h1v1h-1zM591 262h1v1h-1zM592 263h1v1h-1zM593 263h1v1h-1zM594 263h1v1h-1zM595 263h1v1h-1zM596 263h1v1h-1zM597 263h1v1h-1zM598 263h1v1h-1zM599 264h1v1h-1zM600 264h1v1h-1zM601 264h1v1h-1zM602 264h1v1h-1zM603 264h1v1h-1zM604 264h1v1h-1zM605 264h1v1h-1zM606 264h1v1h-1zM607 265h1v1h-1zM608 265h1v1h-1zM609 265h1v1h-1zM610 265h1v1h-1zM611 265h1v1h-1zM612 265h1v1h-1zM613 265h1v1h-1zM614 265h1v1h-1zM615 265h1v1h-1zM616 265h1v1h-1zM617 265h1v1h-1zM618 266h1v1h-1zM619 266h1v1h-1zM620 266h1v1h-1zM621 266h1v1h-1zM622 266h1v1h-1zM623 266h1v1h-1zM624 266h1v1h-1zM625 266h1v1h-1zM626 266h1v1h-1zM627 266h1v1h-1zM628 266h1v1h-1zM629 266h1v1h-1zM630 266h1v1h-1zM631 266h1v1h-1zM632 267h1v1h-1zM633 267h1v1h-1zM634 267h1v1h-1zM635 267h1v1h-1zM636 267h1v1h-1zM637 267h1v1h-1zM638 267h1v1h-1zM639 267h1v1h-1zM640 267h1v1h-1zM641 267h1v1h-1zM642 267h1v1h-1zM643 267h1v1h-1zM644 267h1v1h-1zM645 267h1v1h-1zM646 267h1v1h-1zM647 267h1v1h-1zM648 267h1v1h-1zM649 267h1v1h-1zM650 267h1v1h-1zM651 267h1v1h-1zM652 267h1v1h-1zM653 267h1v1h-1zM654 268h1v1h-1zM655 268h1v1h-1zM656 268h1v1h-1zM657 268h1v1h-1zM658 268h1v1h-1zM659 268h1v1h-1zM660 268h1v1h-1zM661 268h1v1h-1zM662 268h1v1h-1zM663 268h1v1h-1zM664 268h1v1h-1zM665 268h1v1h-1zM666 268h1v1h-1zM667 268h1v1h-1zM668 268h1v1h-1zM669 268h1v1h-1zM670 268h1v1h-1zM671 268h1v1h-1zM672 268h1v1h-1zM673 268h1v1h-1zM674 268h1v1h-1zM675 268h1v1h-1zM676 268h1v1h-1zM677 268h1v1h-1zM678 268h1v1h-1zM679 268h1v1h-1zM680 268h1v1h-1zM681 268h1v1h-1zM682 268h1v1h-1zM683 268h1v1h-1zM684 268h1v1h-1zM685 268h1v1h-1zM686 268h1v1h-1zM687 268h1v1h-1zM688 268h1v1h-1zM689 268h1v1h-1zM690 268h1v1h-1zM691 268h1v1h-1zM692 268h1v1h-1zM693 268h1v1h-1zM694 268h1v1h-1zM695 268h1v1h-1zM696 268h1v1h-1zM697 268h1v1h-1zM698 268h1v1h-1zM699 268h1v1h-1zM700 269h1v1h-1zM701 269h1v1h-1zM702 269h1v1h-1zM703 269h1v1h-1zM704 269h1v1h-1zM705 269h1v1h-1zM706 269h1v1h-1zM707 269h1v1h-1zM708 269h1v1h-1zM709 269h1v1h-1zM710 269h1v1h-1zM711 269h1v1h-1zM712 269h1v1h-1zM713 269h1v1h-1zM714 269h1v1h-1zM715 269h1v1h-1zM716 269h1v1h-1zM717 269h1v1h-1zM718 269h1v1h-1zM719 269h1v1h-1zM720 269h1v1h-1zM721 269h1v1h-1zM722 269h1v1h-1zM723 269h1v1h-1zM724 269h1v1h-1zM725 269h1v1h-1zM726 269h1v1h-1zM727 269h1v1h-1zM728 269h1v1h-1zM729 269h1v1h-1zM730 269h1v1h-1zM731 269h1v1h-1zM732 269h1v1h-1zM733 269h1v1h-1zM734 269h1v1h-1zM735 269h1v1h-1zM736 269h1v1h-1zM737 269h1v1h-1zM738 269h1v1h-1zM739 269h1v1h-1zM740 269h1v1h-1zM741 269h1v1h-1zM742 269h1v1h-1zM743 269h1v1h-1zM744 269h1v1h-1zM745 269h1v1h-1zM746 269h1v1h-1zM747 269h1v1h-1zM748 269h1v1h-1zM749 269h1v1h-1zM750 269h1v1h-1zM751 269h1v1h-1zM752 269h1v1h-1zM753 269h1v1h-1zM754 269h1v1h-1zM755 269h1v1h-1zM756 269h1v1h-1zM757 269h1v1h-1zM758 269h1v1h-1zM759 269h1v1h-1zM760 269h1v1h-1zM761 269h1v1h-1zM762 269h1v1h-1zM763 269h1v1h-1zM764 269h1v1h-1zM765 269h1v1h-1zM766 269h1v1h-1zM767 269h1v1h-1zM768 269h1v1h-1zM769 269h1v1h-1zM770 269h1v1h-1zM771 269h1v1h-1zM772 269h1v1h-1zM773 269h1v1h-1zM774 269h1v1h-1zM775 269h1v1h-1zM776 269h1v1h-1zM777 269h1v1h-1zM778 269h1v1h-1zM779 269h1v1h-1zM780 269h1v1h-1zM781 269h1v1h-1zM782 269h1v1h-1zM783 269h1v1h-1zM784 269h1v1h-1zM785 269h1v1h-1zM786 269h1v1h-1zM787 269h1v1h-1zM788 269h1v1h-1zM789 269h1v1h-1zM790 269h1v1h-1zM791 269h1v1h-1zM792 269h1v1h-1zM793 269h1v1h-1zM794 269h1v1h-1zM795 269h1v1h-1zM796 269h1v1h-1zM797 269h1v1h-1zM798 269h1v1h-1zM799 269h1v1h-1zM800 269h1v1h-1zM801 269h1v1h-1zM802 269h1v1h-1zM803 269h1v1h-1zM804 269h1v1h-1zM805 269h1v1h-1zM806 269h1v1h-1zM807 269h1v1h-1zM808 269h1v1h-1zM809 269h1v1h-1zM810 269h1v1h-1zM811 269h1v1h-1zM812 269h1v1h-1zM813 269h1v1h-1zM814 269h1v1h-1zM815 269h1v1h-1zM816 269h1v1h-1zM817 269h1v1h-1zM818 269h1v1h-1zM819 269h1v1h-1zM820 269h1v1h-1zM821 269h1v1h-1zM822 269h1v1h-1zM823 269h1v1h-1zM824 269h1v1h-1zM825 269h1v1h-1zM826 269h1v1h-1zM827 269h1v1h-1zM828 269h1v1h-1zM829 269h1v1h-1zM830 269h1v1h-1zM831 269h1v1h-1zM832 269h1v1h-1zM833 269h1v1h-1zM834 269h1v1h-1zM835 269h1v1h-1zM836 269h1v1h-1zM837 269h1v1h-1zM838 269h1v1h-1zM839 269h1v1h-1zM840 269h1v1h-1zM841 269h1v1h-1zM842 269h1v1h-1zM843 269h1v1h-1zM844 269h1v1h-1zM845 269h1v1h-1zM846 269h1v1h-1zM847 269h1v1h-1zM848 269h1v1h-1zM849 269h1v1h-1zM850 269h1v1h-1zM851 269h1v1h-1zM852 269h1v1h-1zM853 269h1v1h-1zM854 269h1v1h-1zM855 269h1v1h-1zM856 269h1v1h-1zM857 269h1v1h-1zM858 269h1v1h-1zM859 269h1v1h-1zM860 269h1v1h-1zM861 269h1v1h-1zM862 269h1v1h-1zM863 269h1v1h-1zM864 269h1v1h-1zM865 269h1v1h-1zM866 269h1v1h-1zM867 269h1v1h-1zM868 269h1v1h-1zM869 269h1v1h-1zM870 269h1v1h-1zM871 269h1v1h-1zM872 269h1v1h-1zM873 269h1v1h-1zM874 269h1v1h-1zM875 269h1v1h-1zM876 269h1v1h-1zM877 269h1v1h-1zM878 269h1v1h-1zM879 269h1v1h-1zM880 269h1v1h-1zM881 269h1v1h-1zM882 269h1v1h-1zM883 269h1v1h-1zM884 269h1v1h-1zM885 269h1v1h-1zM886 269h1v1h-1zM887 269h1v1h-1zM888 269h1v1h-1zM889 269h1v1h-1zM890 269h1v1h-1zM891 269h1v1h-1zM892 269h1v1h-1zM893 269h1v1h-1zM894 269h1v1h-1zM895 269h1v1h-1zM896 269h1v1h-1zM897 269h1v1h-1zM898 269h1v1h-1zM899 269h1v1h-1zM900 269h1v1h-1zM901 269h1v1h-1zM902 269h1v1h-1zM903 269h1v1h-1zM904 269h1v1h-1zM905 269h1v1h-1zM906 269h1v1h-1zM907 269h1v1h-1zM908 269h1v1h-1zM909 269h1v1h-1zM910 269h1v1h-1zM911 269h1v1h-1zM912 269h1v1h-1zM913 269h1v1h-1zM914 269h1v1h-1zM915 269h1v1h-1zM916 269h1v1h-1zM917 269h1v1h-1zM918 269h1v1h-1zM919 269h1v1h-1zM920 269h1v1h-1zM921 269h1v1h-1zM922 269h1v1h-1zM923 269h1v1h-1zM924 269h1v1h-1zM925 269h1v1h-1zM926 269h1v1h-1zM927 269h1v1h-1zM928 269h1v1h-1zM929 269h1v1h-1zM930 269h1v1h-1zM931 269h1v1h-1zM932 269h1v1h-1zM933 269h1v1h-1zM934 269h1v1h-1zM935 269h1v1h-1zM936 269h1v1h-1zM937 269h1v1h-1zM938 269h1v1h-1zM939 269h1v1h-1zM940 269h1v1h-1zM941 269h1v1h-1zM942 269h1v1h-1zM943 269h1v1h-1zM944 269h1v1h-1zM945 269h1v1h-1zM946 269h1v1h-1zM947 269h1v1h-1zM948 269h1v1h-1zM949 269h1v1h-1zM950 269h1v1h-1zM951 269h1v1h-1zM952 269h1v1h-1zM953 269h1v1h-1zM954 269h1v1h-1zM955 269h1v1h-1zM956 269h1v1h-1zM957 269h1v1h-1zM958 269h1v1h-1zM959 269h1v1h-1zM960 269h1v1h-1zM961 269h1v1h-1zM962 269h1v1h-1zM963 269h1v1h-1zM964 269h1v1h-1zM965 269h1v1h-1zM966 269h1v1h-1zM967 269h1v1h-1zM968 269h1v1h-1zM969 269h1v1h-1zM970 269h1v1h-1zM971 269h1v1h-1zM972 269h1v1h-1zM973 269h1v1h-1zM974 269h1v1h-1zM975 269h1v1h-1zM976 269h1v1h-1zM977 269h1v1h-1zM978 269h1v1h-1zM979 269h1v1h-1zM980 269h1v1h-1zM981 269h1v1h-1zM982 269h1v1h-1zM983 269h1v1h-1zM984 269h1v1h-1zM985 269h1v1h-1zM986 269h1v1h-1zM987 269h1v1h-1zM988 269h1v1h-1zM989 269h1v1h-1zM990 269h1v1h-1zM991 269h1v1h-1zM992 269h1v1h-1zM993 269h1v1h-1zM994 269h1v1h-1zM995 269h1v1h-1zM996 269h1v1h-1zM997 269h1v1h-1zM998 269h1v1h-1zM999 269h1v1h-1zM1000 269h1v1h-1zM1001 269h1v1h-1zM1002 269h1v1h-1zM1003 269h1v1h-1z"/><rect x="11" y="47" width="1" height="444" fill="#00ffff"/><rect x="12" y="47" width="1" height="444" fill="#5a7cff"/><rect x="27" y="47" width="1" height="444" fill="#ff0000"/><path fill="#ff0000" d="M5 41h13v1h-13zM6 42h11v1h-11zM7 43h9v1h-9zM8 44h7v1h-7zM9 45h5v1h-5zM10 46h3v1h-3z"/><rect x="10" y="42" width="2" height="4" fill="#ffffff"/><rect x="594" y="47" width="1" height="444" fill="#0000ff"/><path fill="#0000ff" d="M586 39h17v1h-17zM587 40h15v1h-15zM588 41h13v1h-13zM589 42h11v1h-11zM590 43h9v1h-9zM591 44h7v1h-7zM592 45h5v1h-5zM593 46h3v1h-3z"/><path d="M592 40h3v1h-3zM594 41h2v1h-2zM593 42h2v1h-2zM592 43h2v1h-2zM593 44h4v1h-4z" fill="#fff"/><rect x="594" y="47" width="1" height="1" fill="#ffff00"/><rect x="593" y="148" width="1" height="1" fill="#0000ff"/><rect x="594" y="148" width="1" height="1" fill="#ffffff"/><rect x="595" y="148" width="1" height="1" fill="#0000ff"/><rect x="592" y="149" width="1" height="1" fill="#0000ff"/><rect x="594" y="149" width="1" height="1" fill="#0000ff"/><rect x="596" y="149" width="1" height="1" fill="#0000ff"/><rect x="591" y="150" width="1" height="1" fill="#0000ff"/><rect x="592" y="150" width="1" height="1" fill="#ff0000"/><rect x="593" y="150" width="1" height="1" fill="#ff0000"/><rect x="594" y="150" width="1" height="1" fill="#00ff00"/><rect x="596" y="150" width="1" height="1" fill="#0000ff"/><rect x="591" y="151" width="1" height="1" fill="#00ff00"/><rect x="592" y="151" width="1" height="1" fill="#ffffff"/><rect x="593" y="151" width="1" height="1" fill="#ffffff"/><rect x="594" y="151" width="1" height="1" fill="#00ff00"/><rect x="595" y="151" width="1" height="1" fill="#ffffff"/><rect x="596" y="151" width="1" height="1" fill="#ffffff"/><rect x="597" y="151" width="1" height="1" fill="#0000ff"/><rect x="591" y="152" width="1" height="1" fill="#00ff00"/><rect x="592" y="152" width="1" height="1" fill="#ffffff"/><rect x="593" y="152" width="1" height="1" fill="#ffffff"/><rect x="594" y="152" width="1" height="1" fill="#ffffff"/><rect x="595" y="152" width="1" height="1" fill="#ff0000"/><rect x="596" y="152" width="1" height="1" fill="#0000ff"/><rect x="592" y="153" width="1" height="1" fill="#0000ff"/><rect x="593" y="153" width="1" height="1" fill="#0000ff"/><rect x="594" y="153" width="1" height="1" fill="#0000ff"/><rect x="595" y="153" width="1" height="1" fill="#00ff00"/><rect x="596" y="153" width="1" height="1" fill="#0000ff"/><rect x="594" y="154" width="1" height="1" fill="#ffffff"/><rect x="594" y="269" width="1" height="1" fill="#ffff00"/><rect x="594" y="263" width="1" height="1" fill="#c880ff"/></svg>
<div class="a" style="left:1px;top:519px;width:59px;height:59px;border:1px solid #fff;box-sizing:border-box"></div>
<div class="a" style="left:0;top:518px;width:59px;height:59px;border:1px solid #a0a0a0;box-sizing:border-box"></div>
<div class="t" style="left:5.81px;top:527.69px;font-size:11px;line-height:11px;color:#000;transform:scaleX(0.9489);transform-origin:0 0;">T1</div>
<div class="t" style="left:5.81px;top:542.69px;font-size:11px;line-height:11px;color:#000;transform:scaleX(0.9489);transform-origin:0 0;">T2</div>
<div class="t" style="left:5.80px;top:561.69px;font-size:11px;line-height:11px;color:#000;transform:scaleX(0.9784);transform-origin:0 0;">T2-T1</div>
<div class="btn" style="left:26px;top:526px;width:13px;height:16px;"></div>
<div class="btn" style="left:43px;top:526px;width:13px;height:16px;"></div>
<div class="btn" style="left:26px;top:544px;width:13px;height:14px;"></div>
<div class="btn" style="left:43px;top:544px;width:13px;height:14px;"></div>
<svg class="a" style="left:0;top:0" width="60" height="580" shape-rendering="crispEdges"><polygon points="29,533.5 34,528.5 34,538.5" fill="#000" shape-rendering="auto"/><rect x="34" y="532" width="4" height="3" fill="#000"/><polygon points="54,533.5 49,528.5 49,538.5" fill="#000" shape-rendering="auto"/><rect x="45" y="532" width="4" height="3" fill="#000"/><polygon points="29,550.5 34,545.5 34,555.5" fill="#000" shape-rendering="auto"/><rect x="34" y="549" width="4" height="3" fill="#000"/><polygon points="54,550.5 49,545.5 49,555.5" fill="#000" shape-rendering="auto"/><rect x="45" y="549" width="4" height="3" fill="#000"/></svg>
<div class="a" style="left:60px;top:518px;width:787px;height:60px;background:#fff;box-sizing:border-box;border-top:1px solid #a0a0a0;border-left:1px solid #a0a0a0;border-right:1px solid #fff;border-bottom:1px solid #fff"></div>
<div class="a" style="left:61px;top:519px;width:785px;height:58px;box-sizing:border-box;border-top:1px solid #696969;border-left:1px solid #696969;border-right:1px solid #e3e3e3;border-bottom:1px solid #e3e3e3"></div>
<div class="t" style="left:85.11px;top:521.69px;font-size:11px;line-height:11px;color:#000;transform:scaleX(0.9352);transform-origin:0 0;">Time</div>
<div class="t" style="left:76.09px;top:534.69px;font-size:11px;line-height:11px;color:#000;transform:scaleX(1.0174);transform-origin:0 0;">0.000 s</div>
<div class="t" style="left:73.70px;top:547.69px;font-size:11px;line-height:11px;color:#000;">5.871 us</div>
<div class="t" style="left:73.70px;top:560.69px;font-size:11px;line-height:11px;color:#000;">5.871 us</div>
<div class="t" style="left:150.22px;top:521.69px;font-size:11px;line-height:11px;color:#000;transform:scaleX(0.9575);transform-origin:0 0;">Channel_A</div>
<div class="t" style="left:150.61px;top:534.69px;font-size:11px;line-height:11px;color:#000;transform:scaleX(0.9754);transform-origin:0 0;">-13.518 V</div>
<div class="t" style="left:154.15px;top:547.69px;font-size:11px;line-height:11px;color:#000;transform:scaleX(0.9363);transform-origin:0 0;">1.602 mV</div>
<div class="t" style="left:154.14px;top:560.69px;font-size:11px;line-height:11px;color:#000;transform:scaleX(0.9467);transform-origin:0 0;">13.520 V</div>
<div class="t" style="left:230.33px;top:521.69px;font-size:11px;line-height:11px;color:#000;transform:scaleX(0.9495);transform-origin:0 0;">Channel_B</div>
<div class="t" style="left:224.51px;top:534.69px;font-size:11px;line-height:11px;color:#000;transform:scaleX(0.9673);transform-origin:0 0;">-771.915 mV</div>
<div class="t" style="left:230.41px;top:547.69px;font-size:11px;line-height:11px;color:#000;transform:scaleX(0.9775);transform-origin:0 0;">81.962 uV</div>
<div class="t" style="left:228.33px;top:560.69px;font-size:11px;line-height:11px;color:#000;transform:scaleX(0.9442);transform-origin:0 0;">771.996 mV</div>
<div class="btn" style="left:854px;top:526px;width:61px;height:20px;"></div>
<div class="t" style="left:862.40px;top:530.69px;font-size:11px;line-height:11px;color:#000;">Reverse</div>
<div class="btn" style="left:854px;top:553px;width:61px;height:21px;"></div>
<div class="t" style="left:870.91px;top:558.69px;font-size:11px;line-height:11px;color:#000;transform:scaleX(0.9729);transform-origin:0 0;">Save</div>
<div class="t" style="left:922.26px;top:568.69px;font-size:11px;line-height:11px;color:#000;transform:scaleX(1.0418);transform-origin:0 0;">Ext. trigger</div>
<svg class="a" style="left:980.8px;top:564.4px" width="20" height="20"><circle cx="10" cy="10" r="5.9" fill="#fff" stroke="#bdbdbd" stroke-width="1.1"/><circle cx="10" cy="10" r="3.4" fill="#cccccc"/></svg>
<div class="grp" style="left:0px;top:591px;width:247px;height:72px;"></div><div class="a" style="left:6.1px;top:589px;width:50.0px;height:5px;background:#f0f0f0"></div><div class="t" style="left:8.91px;top:586.69px;font-size:11px;line-height:11px;color:#000;transform:scaleX(0.9308);transform-origin:0 0;">Timebase</div>
<div class="grp" style="left:247px;top:591px;width:245px;height:72px;"></div><div class="a" style="left:252.6px;top:589px;width:54.3px;height:5px;background:#f0f0f0"></div><div class="t" style="left:255.13px;top:586.69px;font-size:11px;line-height:11px;color:#000;transform:scaleX(0.9483);transform-origin:0 0;">Channel A</div>
<div class="grp" style="left:492px;top:591px;width:248px;height:72px;"></div><div class="a" style="left:497.6px;top:589px;width:53.6px;height:5px;background:#f0f0f0"></div><div class="t" style="left:500.13px;top:586.69px;font-size:11px;line-height:11px;color:#000;transform:scaleX(0.9457);transform-origin:0 0;">Channel B</div>
<div class="grp" style="left:740px;top:591px;width:272px;height:72px;"></div><div class="a" style="left:745.3px;top:589px;width:38.7px;height:5px;background:#f0f0f0"></div><div class="t" style="left:748.11px;top:586.69px;font-size:11px;line-height:11px;color:#000;transform:scaleX(0.9598);transform-origin:0 0;">Trigger</div>
<div class="t" style="left:2.21px;top:604.69px;font-size:11px;line-height:11px;color:#000;transform:scaleX(0.9720);transform-origin:0 0;">Scale:</div>
<div class="inp" style="left:97px;top:598px;width:144px;height:19px;"></div>
<div class="t" style="left:102.99px;top:602.69px;font-size:11px;line-height:11px;color:#000;transform:scaleX(0.9541);transform-origin:0 0;">1 us/Div</div>
<div class="t" style="left:2.50px;top:623.69px;font-size:11px;line-height:11px;color:#000;">X pos.(Div):</div>
<div class="inp" style="left:123px;top:619px;width:118px;height:19px;"></div>
<div class="t" style="left:128.62px;top:623.69px;font-size:11px;line-height:11px;color:#000;transform:scaleX(0.9434);transform-origin:0 0;">0</div>
<div class="btn sel" style="left:8px;top:643px;width:52px;height:17px;"></div>
<div class="t" style="left:25.41px;top:646.69px;font-size:11px;line-height:11px;color:#000;transform:scaleX(0.9705);transform-origin:0 0;">Y/T</div>
<div class="btn" style="left:62px;top:643px;width:55px;height:17px;"></div>
<div class="t" style="left:79.90px;top:646.69px;font-size:11px;line-height:11px;color:#000;transform:scaleX(0.9602);transform-origin:0 0;">Add</div>
<div class="btn" style="left:121px;top:643px;width:56px;height:17px;"></div>
<div class="t" style="left:138.38px;top:646.69px;font-size:11px;line-height:11px;color:#000;transform:scaleX(1.0182);transform-origin:0 0;">B/A</div>
<div class="btn" style="left:179px;top:643px;width:57px;height:17px;"></div>
<div class="t" style="left:198.70px;top:646.69px;font-size:11px;line-height:11px;color:#000;transform:scaleX(0.9655);transform-origin:0 0;">A/B</div>
<div class="t" style="left:249.22px;top:604.69px;font-size:11px;line-height:11px;color:#000;transform:scaleX(0.9617);transform-origin:0 0;">Scale:</div>
<div class="inp" style="left:345px;top:598px;width:144px;height:19px;"></div>
<div class="t" style="left:351.06px;top:602.69px;font-size:11px;line-height:11px;color:#000;transform:scaleX(0.9243);transform-origin:0 0;">1 mV/Div</div>
<div class="t" style="left:249.50px;top:623.69px;font-size:11px;line-height:11px;color:#000;transform:scaleX(0.9894);transform-origin:0 0;">Y pos.(Div):</div>
<div class="inp" style="left:370px;top:619px;width:119px;height:19px;"></div>
<div class="t" style="left:374.95px;top:623.69px;font-size:11px;line-height:11px;color:#000;transform:scaleX(1.1132);transform-origin:0 0;">0</div>
<div class="btn" style="left:251px;top:643px;width:52px;height:17px;"></div>
<div class="t" style="left:269.70px;top:646.69px;font-size:11px;line-height:11px;color:#000;transform:scaleX(0.9172);transform-origin:0 0;">AC</div>
<div class="btn" style="left:305px;top:643px;width:54px;height:17px;"></div>
<div class="t" style="left:328.38px;top:646.69px;font-size:11px;line-height:11px;color:#000;transform:scaleX(1.0377);transform-origin:0 0;">0</div>
<div class="btn sel" style="left:361px;top:643px;width:55px;height:17px;"></div>
<div class="t" style="left:379.36px;top:646.69px;font-size:11px;line-height:11px;color:#000;transform:scaleX(0.9355);transform-origin:0 0;">DC</div>
<svg class="a" style="left:467.9px;top:640.4px" width="20" height="20"><circle cx="10" cy="10" r="5.9" fill="#fff" stroke="#bdbdbd" stroke-width="1.1"/><circle cx="10" cy="10" r="3.4" fill="#cccccc"/></svg>
<div class="t" style="left:493.82px;top:604.69px;font-size:11px;line-height:11px;color:#000;transform:scaleX(0.9617);transform-origin:0 0;">Scale:</div>
<div class="inp" style="left:591px;top:598px;width:145px;height:19px;"></div>
<div class="t" style="left:596.96px;top:602.69px;font-size:11px;line-height:11px;color:#000;transform:scaleX(0.9243);transform-origin:0 0;">1 mV/Div</div>
<div class="t" style="left:494.10px;top:623.69px;font-size:11px;line-height:11px;color:#000;transform:scaleX(0.9894);transform-origin:0 0;">Y pos.(Div):</div>
<div class="inp" style="left:616px;top:619px;width:120px;height:19px;"></div>
<div class="t" style="left:621.05px;top:623.69px;font-size:11px;line-height:11px;color:#000;transform:scaleX(1.1132);transform-origin:0 0;">0</div>
<div class="btn" style="left:497px;top:644px;width:46px;height:18px;"></div>
<div class="t" style="left:512.70px;top:647.69px;font-size:11px;line-height:11px;color:#000;transform:scaleX(0.9306);transform-origin:0 0;">AC</div>
<div class="btn" style="left:545px;top:644px;width:46px;height:18px;"></div>
<div class="t" style="left:563.85px;top:647.69px;font-size:11px;line-height:11px;color:#000;transform:scaleX(1.1321);transform-origin:0 0;">0</div>
<div class="btn sel" style="left:593px;top:644px;width:49px;height:18px;"></div>
<div class="t" style="left:608.56px;top:647.69px;font-size:11px;line-height:11px;color:#000;transform:scaleX(0.9287);transform-origin:0 0;">DC</div>
<div class="btn" style="left:644px;top:644px;width:42px;height:18px;"></div>
<div class="t" style="left:662.56px;top:647.69px;font-size:11px;line-height:11px;color:#000;transform:scaleX(1.1071);transform-origin:0 0;">-</div>
<svg class="a" style="left:719.9px;top:640.4px" width="20" height="20"><circle cx="10" cy="10" r="5.9" fill="#fff" stroke="#bdbdbd" stroke-width="1.1"/><circle cx="10" cy="10" r="3.4" fill="#cccccc"/></svg>
<div class="t" style="left:742.48px;top:604.69px;font-size:11px;line-height:11px;color:#000;transform:scaleX(1.0264);transform-origin:0 0;">Edge:</div>
<div class="btn" style="left:788px;top:602px;width:39px;height:16px;"></div>
<div class="btn sel" style="left:829px;top:602px;width:38px;height:16px;"></div>
<svg class="a" style="left:780px;top:600px" width="90" height="20" shape-rendering="crispEdges"><path d="M22 13h5v1h-5zM26 6h1v7h-1zM27 6h4v1h-4zM24 10h1v1h-1zM25 9h1v1h-1zM27 9h1v1h-1zM28 10h1v1h-1z" fill="#000"/><path d="M63 6h5v1h-5zM67 7h1v6h-1zM67 12h5v1h-5zM65 8h1v1h-1zM66 9h1v1h-1zM68 9h1v1h-1zM69 8h1v1h-1z" fill="#000"/></svg>
<div class="btn" style="left:872px;top:602px;width:40px;height:18px;"></div>
<div class="t" style="left:887.70px;top:605.69px;font-size:11px;line-height:11px;color:#000;transform:scaleX(0.8919);transform-origin:0 0;">A</div>
<div class="btn" style="left:914px;top:602px;width:42px;height:18px;"></div>
<div class="t" style="left:930.79px;top:605.69px;font-size:11px;line-height:11px;color:#000;transform:scaleX(0.8983);transform-origin:0 0;">B</div>
<div class="btn sel" style="left:958px;top:602px;width:46px;height:18px;"></div>
<div class="t" style="left:971.39px;top:605.69px;font-size:11px;line-height:11px;color:#000;transform:scaleX(1.1180);transform-origin:0 0;">Ext</div>
<div class="t" style="left:742.48px;top:623.69px;font-size:11px;line-height:11px;color:#000;transform:scaleX(1.0256);transform-origin:0 0;">Level:</div>
<div class="inp" style="left:787px;top:622px;width:191px;height:20px;"></div>
<div class="t" style="left:793.60px;top:626.69px;font-size:11px;line-height:11px;color:#000;transform:scaleX(0.8750);transform-origin:0 0;">1</div>
<div class="inp" style="left:978px;top:622px;width:27px;height:20px;"></div>
<div class="t" style="left:985.60px;top:625.69px;font-size:11px;line-height:11px;color:#000;transform:scaleX(0.7397);transform-origin:0 0;">V</div>
<div class="btn" style="left:745px;top:643px;width:65px;height:17px;"></div>
<div class="t" style="left:762.14px;top:646.69px;font-size:11px;line-height:11px;color:#000;transform:scaleX(0.9272);transform-origin:0 0;">Single</div>
<div class="btn sel" style="left:812px;top:643px;width:70px;height:17px;"></div>
<div class="t" style="left:828.74px;top:646.69px;font-size:11px;line-height:11px;color:#000;transform:scaleX(0.9527);transform-origin:0 0;">Normal</div>
<div class="btn" style="left:884px;top:643px;width:60px;height:17px;"></div>
<div class="t" style="left:901.90px;top:646.69px;font-size:11px;line-height:11px;color:#000;">Auto</div>
<div class="btn" style="left:946px;top:643px;width:61px;height:17px;"></div>
<div class="t" style="left:962.31px;top:646.69px;font-size:11px;line-height:11px;color:#000;transform:scaleX(0.9888);transform-origin:0 0;">None</div>
<svg class="a" style="left:1000px;top:650px" width="15" height="14" shape-rendering="crispEdges"><path d="M11 3h2v2h-2zM11 7h2v2h-2zM7 7h2v2h-2zM11 11h2v2h-2zM7 11h2v2h-2zM3 11h2v2h-2z" fill="#c8c8c8"/></svg>
<!-- scrollbar -->
<div class="a" style="left:16px;top:503px;width:981px;height:11px;background:#cdcdcd"></div>
<svg class="a" style="left:0;top:502px" width="1015" height="14"><polygon points="8.5,3 11,3 7.5,6.5 11,10 8.5,10 5,6.5" fill="#606060"/><polygon points="1006.5,3 1004,3 1007.5,6.5 1004,10 1006.5,10 1010,6.5" fill="#606060"/></svg>
<div class="a" style="left:1015px;top:6px;width:1px;height:658px;background:#1f4f7f"></div>
<div class="a" style="left:1016px;top:6px;width:2px;height:661px;background:#00508f"></div>
<div class="a" style="left:0;top:664px;width:1016px;height:1px;background:#1f4f7f"></div>
<div class="a" style="left:0;top:665px;width:1018px;height:2px;background:#00508f"></div>
</body></html>
